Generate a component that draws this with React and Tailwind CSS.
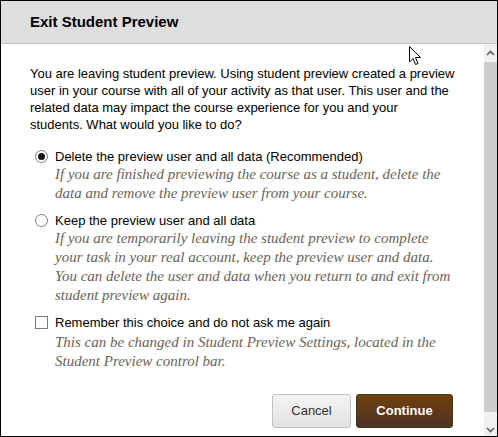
export default function App() {
  return (
    <div className="relative flex h-[437px] w-[498px] flex-col border border-black bg-white font-['Liberation_Sans',Arial,sans-serif] text-black">
      <div className="flex h-[43px] shrink-0 items-center border-b border-[#c6c6c6] bg-[#dedede] pl-[29px]">
        <h1 className="text-[15px] font-bold">Exit Student Preview</h1>
      </div>

      <div className="flex min-h-0 flex-1">
        <div className="flex flex-1 flex-col pl-[29px] pt-[21px]">
          <p className="w-[426px] text-[13px] leading-[17px]">
            You are leaving student preview. Using student preview created a preview
            <br />
            user in your course with all of your activity as that user. This user and the
            <br />
            related data may impact the course experience for you and your
            <br />
            students. What would you like to do?
          </p>

          <div className="mt-[15px] flex flex-col">
            <Option
              control={<Radio checked />}
              label="Delete the preview user and all data (Recommended)"
              note="If you are finished previewing the course as a student, delete the data and remove the preview user from your course."
            />
            <Option
              className="mt-[9px]"
              control={<Radio />}
              label="Keep the preview user and all data"
              note="If you are temporarily leaving the student preview to complete your task in your real account, keep the preview user and data. You can delete the user and data when you return to and exit from student preview again."
            />
            <Option
              className="mt-[9px]"
              noteClass="mt-[2px]"
              control={<Checkbox />}
              label="Remember this choice and do not ask me again"
              note="This can be changed in Student Preview Settings, located in the Student Preview control bar."
            />
          </div>

          <div className="mt-auto flex justify-end gap-[5px] pb-[8px] pr-[31px]">
            <button className="h-[34px] w-[79px] rounded-[3px] border border-[#c2c2c2] bg-gradient-to-b from-[#f4f4f4] to-[#e2e2e2] text-[13px] text-[#333]">
              Cancel
            </button>
            <button className="h-[34px] w-[97px] rounded-[3px] border border-[#3d3a1c] bg-gradient-to-b from-[#733f0b] to-[#4b3222] text-[13px] font-bold text-white">
              Continue
            </button>
          </div>
        </div>

        <div className="flex w-[13px] shrink-0 flex-col bg-[#f0f0f0]">
          <div className="flex h-[18px] items-center justify-center">
            <svg width="9" height="6" viewBox="0 0 9 6">
              <path d="M1 5 L4.5 1.5 L8 5" fill="none" stroke="#606060" strokeWidth="1.6" />
            </svg>
          </div>
          <div className="flex-1 bg-[#cdcdcd]" />
          <div className="flex h-[24px] items-end justify-center pb-[3px]">
            <svg width="9" height="6" viewBox="0 0 9 6">
              <path d="M1 1 L4.5 4.5 L8 1" fill="none" stroke="#606060" strokeWidth="1.6" />
            </svg>
          </div>
        </div>
      </div>

      <svg
        className="absolute left-[408px] top-[45px]"
        width="13"
        height="20"
        viewBox="0 0 13 20"
      >
        <path
          d="M0.5 0.5 L0.5 16 L4 12.5 L6.5 18.5 L9 17.5 L6.5 11.5 L11.5 11.5 Z"
          fill="white"
          stroke="black"
          strokeWidth="1"
          strokeLinejoin="round"
        />
      </svg>
    </div>
  );
}

function Option({ control, label, note, className = "", noteClass = "" }) {
  return (
    <div className={`flex ${className}`}>
      <div className="flex h-[17px] w-[25px] shrink-0 items-center pl-[5px]">{control}</div>
      <div className="flex flex-col">
        <div className="text-[13px] leading-[17px]">{label}</div>
        <p
          className={`w-[402px] font-['Liberation_Serif',Georgia,serif] text-[15px] italic leading-[19px] text-[#6b625a] ${noteClass}`}
        >
          {note}
        </p>
      </div>
    </div>
  );
}

function Radio({ checked }) {
  return (
    <span className="flex h-[13px] w-[13px] items-center justify-center rounded-full border border-[#7a7a7a] bg-white">
      {checked && <span className="h-[7px] w-[7px] rounded-full bg-[#1a1a1a]" />}
    </span>
  );
}

function Checkbox() {
  return <span className="block h-[13px] w-[13px] border border-[#7a7a7a] bg-white" />;
}
